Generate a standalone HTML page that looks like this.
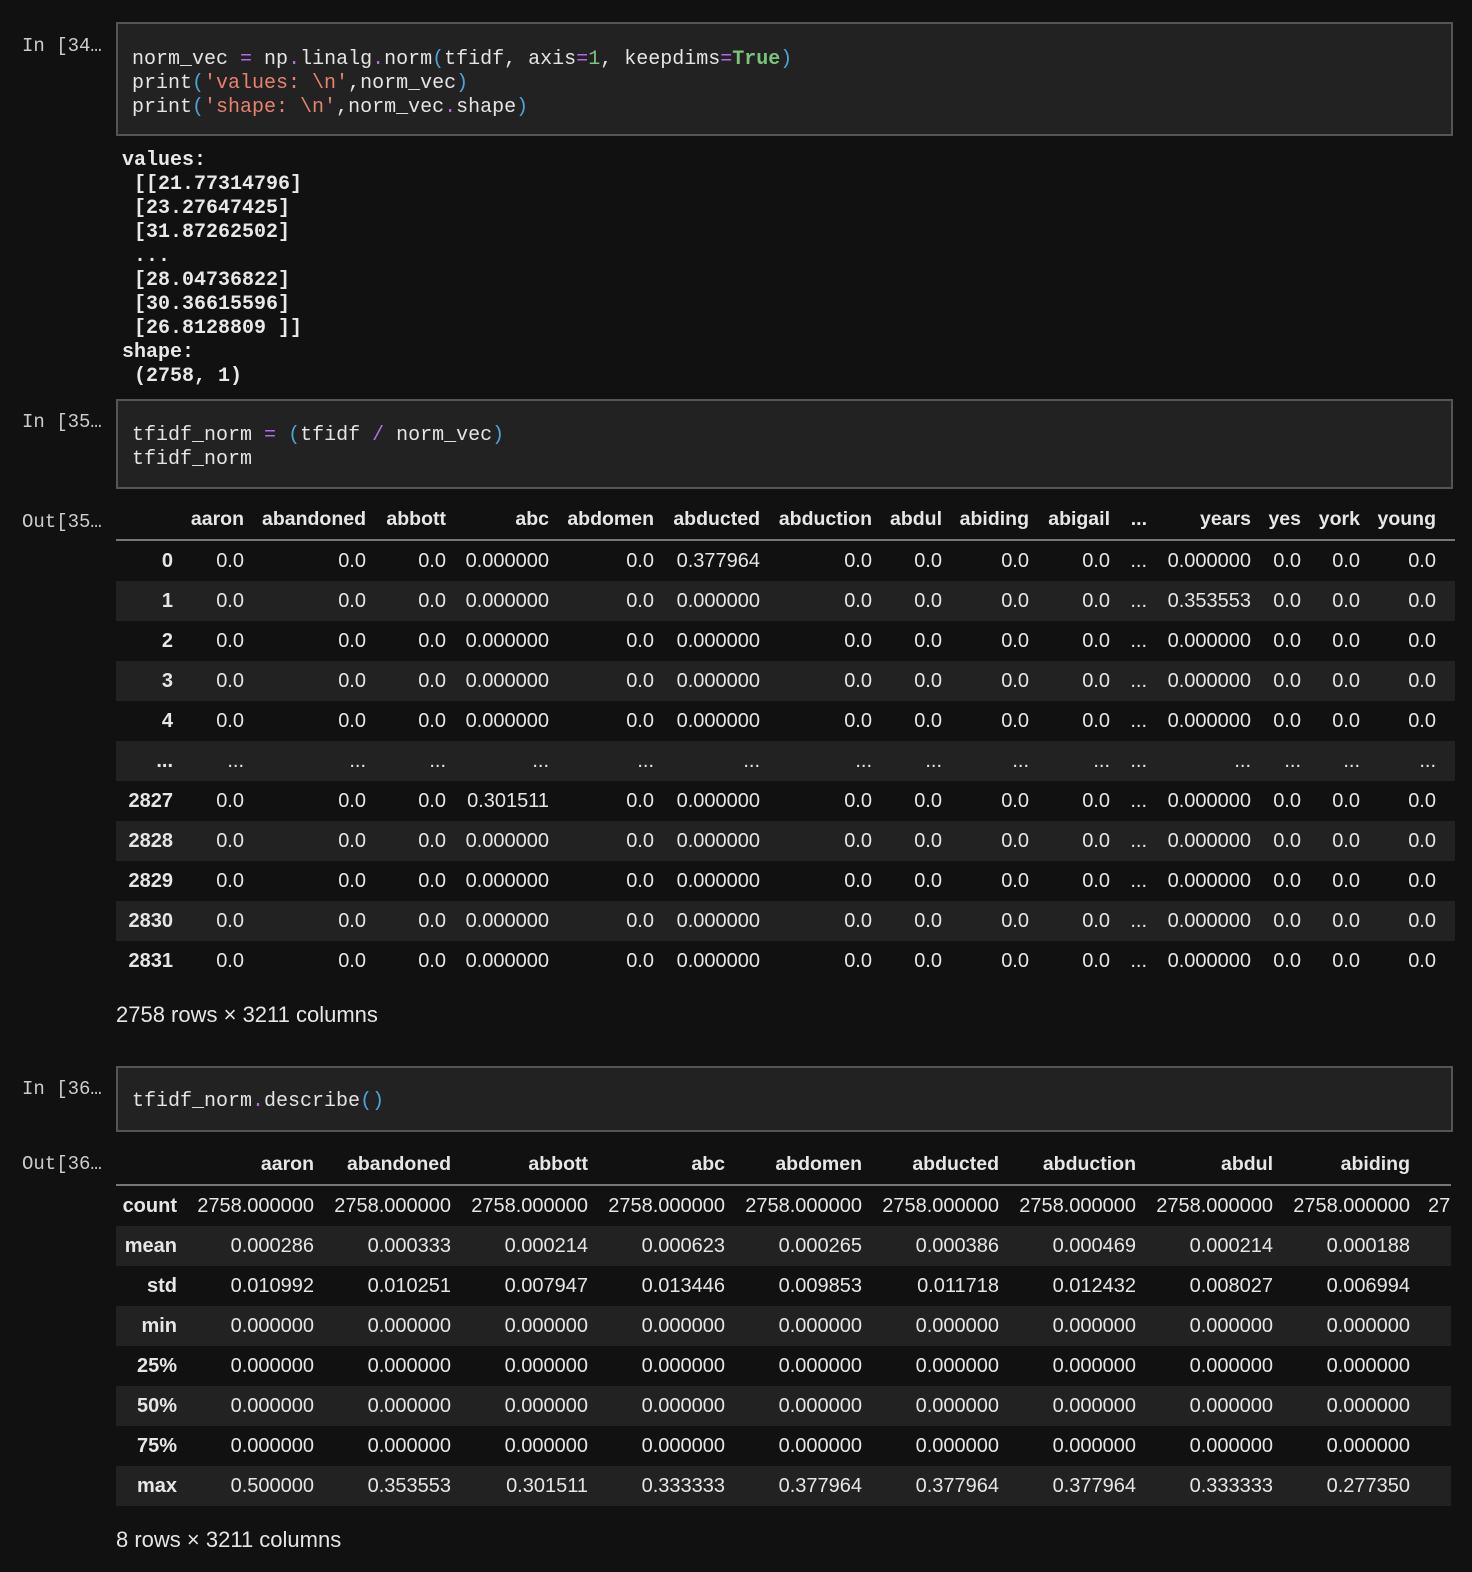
<!DOCTYPE html>
<html><head><meta charset="utf-8"><style>
body{margin:0;background:#111;width:1472px;height:1572px;position:relative;overflow:hidden;color:#ddd;font-family:"Liberation Sans",sans-serif}
.p{position:absolute;left:22px;font-family:"Liberation Mono",monospace;font-size:19px;color:#ccc;line-height:24px}
.box{position:absolute;left:116px;width:1333px;background:#222;border:2px solid #555;font-family:"Liberation Mono",monospace;font-size:20px;line-height:24px;color:#e4e4e4}
.box pre{margin:0;font:inherit;padding-left:14px;white-space:pre}
.o{color:#b36be0}.s{color:#e8826e}.n{color:#7cc37c}.b{color:#4da3d6}.t{color:#7cc37c;font-weight:bold}
.out{position:absolute;left:122px;font-family:"Liberation Mono",monospace;font-size:20px;line-height:24px;color:#e8e8e8;white-space:pre;margin:0;font-weight:bold}
.tw{position:absolute;left:116px;width:1339px;overflow:hidden}
table{border-collapse:collapse;table-layout:fixed;font-size:20px;color:#e6e6e6}
td,th{text-align:right;padding:0 8px 0 0;height:40px;white-space:nowrap;overflow:hidden}
th{font-weight:bold}
thead th{height:40px;border-bottom:2px solid #777;font-size:19.5px}
tbody tr:nth-child(even){background:#222}
.cap{position:absolute;left:116px;font-size:22px;color:#e6e6e6}
</style></head><body>
<div class="p" style="top:34px">In [34…</div>
<div class="box" style="top:22px;height:110px"><pre style="padding-top:24px">norm_vec <span class="o">=</span> np<span class="o">.</span>linalg<span class="o">.</span>norm<span class="b">(</span>tfidf, axis<span class="o">=</span><span class="n">1</span>, keepdims<span class="o">=</span><span class="t">True</span><span class="b">)</span>
print<span class="b">(</span><span class="s">'values: \n'</span>,norm_vec<span class="b">)</span>
print<span class="b">(</span><span class="s">'shape: \n'</span>,norm_vec<span class="o">.</span>shape<span class="b">)</span></pre></div>
<pre class="out" style="top:149px">values:
 [[21.77314796]
 [23.27647425]
 [31.87262502]
 ...
 [28.04736822]
 [30.36615596]
 [26.8128809 ]]
shape:
 (2758, 1)</pre>
<div class="p" style="top:410px">In [35…</div>
<div class="box" style="top:399px;height:86px"><pre style="padding-top:23px">tfidf_norm <span class="o">=</span> <span class="b">(</span>tfidf <span class="o">/</span> norm_vec<span class="b">)</span>
tfidf_norm</pre></div>
<div class="p" style="top:510px">Out[35…</div>
<div class="tw" style="top:499px">
<table style="width:1339px">
<colgroup><col style="width:65px"><col style="width:71px"><col style="width:122px"><col style="width:80px"><col style="width:103px"><col style="width:105px"><col style="width:106px"><col style="width:112px"><col style="width:70px"><col style="width:87px"><col style="width:81px"><col style="width:37px"><col style="width:104px"><col style="width:50px"><col style="width:59px"><col style="width:87px"></colgroup>
<thead><tr><th></th><th>aaron</th><th>abandoned</th><th>abbott</th><th>abc</th><th>abdomen</th><th>abducted</th><th>abduction</th><th>abdul</th><th>abiding</th><th>abigail</th><th>...</th><th>years</th><th>yes</th><th>york</th><th style="padding-right:19px">young</th></tr></thead>
<tbody>
<tr><th>0</th><td>0.0</td><td>0.0</td><td>0.0</td><td>0.000000</td><td>0.0</td><td>0.377964</td><td>0.0</td><td>0.0</td><td>0.0</td><td>0.0</td><td>...</td><td>0.000000</td><td>0.0</td><td>0.0</td><td style="padding-right:19px">0.0</td></tr>
<tr><th>1</th><td>0.0</td><td>0.0</td><td>0.0</td><td>0.000000</td><td>0.0</td><td>0.000000</td><td>0.0</td><td>0.0</td><td>0.0</td><td>0.0</td><td>...</td><td>0.353553</td><td>0.0</td><td>0.0</td><td style="padding-right:19px">0.0</td></tr>
<tr><th>2</th><td>0.0</td><td>0.0</td><td>0.0</td><td>0.000000</td><td>0.0</td><td>0.000000</td><td>0.0</td><td>0.0</td><td>0.0</td><td>0.0</td><td>...</td><td>0.000000</td><td>0.0</td><td>0.0</td><td style="padding-right:19px">0.0</td></tr>
<tr><th>3</th><td>0.0</td><td>0.0</td><td>0.0</td><td>0.000000</td><td>0.0</td><td>0.000000</td><td>0.0</td><td>0.0</td><td>0.0</td><td>0.0</td><td>...</td><td>0.000000</td><td>0.0</td><td>0.0</td><td style="padding-right:19px">0.0</td></tr>
<tr><th>4</th><td>0.0</td><td>0.0</td><td>0.0</td><td>0.000000</td><td>0.0</td><td>0.000000</td><td>0.0</td><td>0.0</td><td>0.0</td><td>0.0</td><td>...</td><td>0.000000</td><td>0.0</td><td>0.0</td><td style="padding-right:19px">0.0</td></tr>
<tr><th>...</th><td>...</td><td>...</td><td>...</td><td>...</td><td>...</td><td>...</td><td>...</td><td>...</td><td>...</td><td>...</td><td>...</td><td>...</td><td>...</td><td>...</td><td style="padding-right:19px">...</td></tr>
<tr><th>2827</th><td>0.0</td><td>0.0</td><td>0.0</td><td>0.301511</td><td>0.0</td><td>0.000000</td><td>0.0</td><td>0.0</td><td>0.0</td><td>0.0</td><td>...</td><td>0.000000</td><td>0.0</td><td>0.0</td><td style="padding-right:19px">0.0</td></tr>
<tr><th>2828</th><td>0.0</td><td>0.0</td><td>0.0</td><td>0.000000</td><td>0.0</td><td>0.000000</td><td>0.0</td><td>0.0</td><td>0.0</td><td>0.0</td><td>...</td><td>0.000000</td><td>0.0</td><td>0.0</td><td style="padding-right:19px">0.0</td></tr>
<tr><th>2829</th><td>0.0</td><td>0.0</td><td>0.0</td><td>0.000000</td><td>0.0</td><td>0.000000</td><td>0.0</td><td>0.0</td><td>0.0</td><td>0.0</td><td>...</td><td>0.000000</td><td>0.0</td><td>0.0</td><td style="padding-right:19px">0.0</td></tr>
<tr><th>2830</th><td>0.0</td><td>0.0</td><td>0.0</td><td>0.000000</td><td>0.0</td><td>0.000000</td><td>0.0</td><td>0.0</td><td>0.0</td><td>0.0</td><td>...</td><td>0.000000</td><td>0.0</td><td>0.0</td><td style="padding-right:19px">0.0</td></tr>
<tr><th>2831</th><td>0.0</td><td>0.0</td><td>0.0</td><td>0.000000</td><td>0.0</td><td>0.000000</td><td>0.0</td><td>0.0</td><td>0.0</td><td>0.0</td><td>...</td><td>0.000000</td><td>0.0</td><td>0.0</td><td style="padding-right:19px">0.0</td></tr>
</tbody></table></div>
<div class="cap" style="top:1002px">2758 rows × 3211 columns</div>
<div class="p" style="top:1077px">In [36…</div>
<div class="box" style="top:1066px;height:62px"><pre style="padding-top:22px">tfidf_norm<span class="o">.</span>describe<span class="b">()</span></pre></div>
<div class="p" style="top:1152px">Out[36…</div>
<div class="tw" style="top:1144px;width:1335px">
<table style="width:1439px">
<colgroup><col style="width:69px"><col style="width:137px"><col style="width:137px"><col style="width:137px"><col style="width:137px"><col style="width:137px"><col style="width:137px"><col style="width:137px"><col style="width:137px"><col style="width:137px"><col style="width:137px"></colgroup>
<thead><tr><th></th><th>aaron</th><th>abandoned</th><th>abbott</th><th>abc</th><th>abdomen</th><th>abducted</th><th>abduction</th><th>abdul</th><th>abiding</th><th></th></tr></thead>
<tbody>
<tr><th>count</th><td>2758.000000</td><td>2758.000000</td><td>2758.000000</td><td>2758.000000</td><td>2758.000000</td><td>2758.000000</td><td>2758.000000</td><td>2758.000000</td><td>2758.000000</td><td style="text-align:left;padding-left:10px">2758.000000</td></tr>
<tr><th>mean</th><td>0.000286</td><td>0.000333</td><td>0.000214</td><td>0.000623</td><td>0.000265</td><td>0.000386</td><td>0.000469</td><td>0.000214</td><td>0.000188</td><td></td></tr>
<tr><th>std</th><td>0.010992</td><td>0.010251</td><td>0.007947</td><td>0.013446</td><td>0.009853</td><td>0.011718</td><td>0.012432</td><td>0.008027</td><td>0.006994</td><td></td></tr>
<tr><th>min</th><td>0.000000</td><td>0.000000</td><td>0.000000</td><td>0.000000</td><td>0.000000</td><td>0.000000</td><td>0.000000</td><td>0.000000</td><td>0.000000</td><td></td></tr>
<tr><th>25%</th><td>0.000000</td><td>0.000000</td><td>0.000000</td><td>0.000000</td><td>0.000000</td><td>0.000000</td><td>0.000000</td><td>0.000000</td><td>0.000000</td><td></td></tr>
<tr><th>50%</th><td>0.000000</td><td>0.000000</td><td>0.000000</td><td>0.000000</td><td>0.000000</td><td>0.000000</td><td>0.000000</td><td>0.000000</td><td>0.000000</td><td></td></tr>
<tr><th>75%</th><td>0.000000</td><td>0.000000</td><td>0.000000</td><td>0.000000</td><td>0.000000</td><td>0.000000</td><td>0.000000</td><td>0.000000</td><td>0.000000</td><td></td></tr>
<tr><th>max</th><td>0.500000</td><td>0.353553</td><td>0.301511</td><td>0.333333</td><td>0.377964</td><td>0.377964</td><td>0.377964</td><td>0.333333</td><td>0.277350</td><td></td></tr>
</tbody></table></div>
<div class="cap" style="top:1527px">8 rows × 3211 columns</div>
</body></html>
